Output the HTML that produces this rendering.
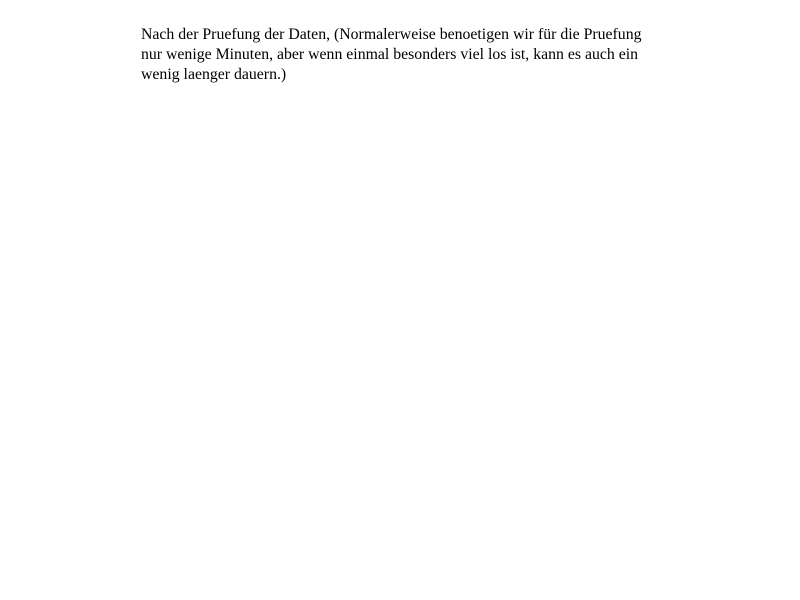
<!DOCTYPE html>
<html><head><meta charset="utf-8"><style>
html,body{margin:0;padding:0;background:#fff;}
body{width:800px;height:600px;overflow:hidden;}
.t{position:absolute;left:141px;top:25px;width:520px;font-family:"Liberation Serif",serif;font-size:15.8px;line-height:20px;color:#000;}
</style></head><body>
<div class="t">Nach der Pruefung der Daten, (Normalerweise benoetigen wir für die Pruefung nur wenige Minuten, aber wenn einmal besonders viel los ist, kann es auch ein wenig laenger dauern.)</div>
</body></html>
